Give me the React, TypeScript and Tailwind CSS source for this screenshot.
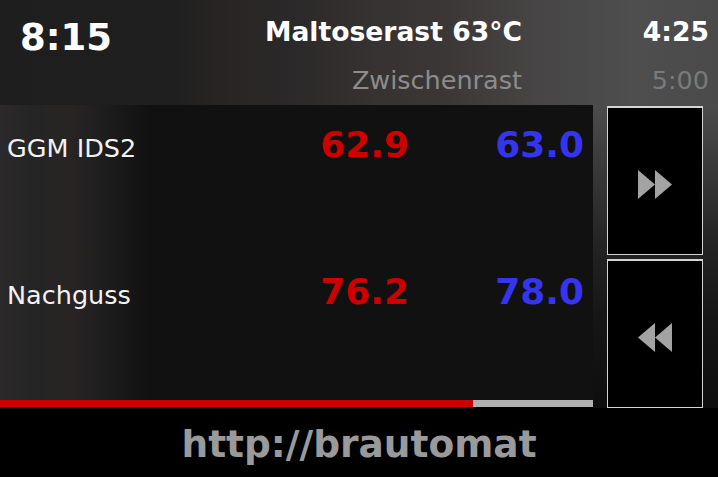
import React from "react";

type Row = {
  name: string;
  actual: string;
  target: string;
};

const rows: Row[] = [
  { name: "GGM IDS2", actual: "62.9", target: "63.0" },
  { name: "Nachguss", actual: "76.2", target: "78.0" },
];

const progress = 473 / 593;

const Forward = () => (
  <svg width="34" height="29" viewBox="0 0 34 29">
    <polygon points="0,0 17,14.5 0,29" fill="#a3a3a3" />
    <polygon points="17,0 34,14.5 17,29" fill="#a3a3a3" />
  </svg>
);

const Rewind = () => (
  <svg width="34" height="29" viewBox="0 0 34 29">
    <polygon points="17,0 0,14.5 17,29" fill="#a3a3a3" />
    <polygon points="34,0 17,14.5 34,29" fill="#a3a3a3" />
  </svg>
);

export default function App() {
  return (
    <div className="w-[718px] h-[477px] overflow-hidden bg-black font-['DejaVu_Sans',sans-serif]">
      {/* header */}
      <div className="flex h-[105px] pt-[19px] bg-[linear-gradient(to_right,#1e1e1e_0%,#1f1f1f_24%,#292524_32%,#2a2828_40%,#363231_52%,#3b3736_62%,#474545_75%,#4e4e4e_88%,#4a4a4a_100%)]">
        <div className="w-[200px] pl-[20px]">
          <div className="text-[37px] leading-none font-bold text-white">8:15</div>
        </div>
        <div className="w-[322px] flex flex-col items-end">
          <div className="text-[26.6px] leading-none font-bold text-white whitespace-nowrap">
            Maltoserast 63°C
          </div>
          <div className="mt-[22px] text-[25.5px] leading-none text-[#8c8c8c]">
            Zwischenrast
          </div>
        </div>
        <div className="w-[187px] flex flex-col items-end">
          <div className="text-[26.6px] leading-none font-bold text-white">4:25</div>
          <div className="mt-[22px] text-[25.5px] leading-none text-[#7a7a7a]">5:00</div>
        </div>
      </div>

      {/* main */}
      <div className="flex h-[303px]">
        <div className="w-[593px] flex flex-col">
          <div className="h-[295px] flex flex-col bg-[linear-gradient(to_right,#2b2929_0%,#252424_6%,#282424_12%,#1f1e1e_17%,#161616_22%,#111111_25%,#111111_100%)]">
            {rows.map((row) => (
              <div key={row.name} className="h-[147px] flex items-baseline pt-[22px] pr-[9px]">
                <div className="flex-1 pl-[7px] text-[25.5px] leading-none text-[#f2f2f2]">
                  {row.name}
                </div>
                <div className="w-[120px] text-right text-[36px] leading-none font-bold text-[#cc0000]">
                  {row.actual}
                </div>
                <div className="w-[175px] text-right text-[36px] leading-none font-bold text-[#3535f0]">
                  {row.target}
                </div>
              </div>
            ))}
          </div>
          <div className="h-[7px] flex bg-[#b0b0b0]">
            <div className="h-full bg-[#cc0000]" style={{ width: `${progress * 100}%` }} />
          </div>
        </div>

        <div className="w-[125px] pl-[14px] pt-[1px] flex flex-col gap-[4px] bg-[linear-gradient(to_bottom,#4c4c4c_0%,#3a3a3a_20%,#242424_45%,#161616_70%,#0e0e0e_100%)]">
          <button className="w-[96px] h-[149px] bg-black border border-[#d4d4d4] border-t-2 flex items-center justify-center pt-[6px]">
            <Forward />
          </button>
          <button className="w-[96px] h-[149px] bg-black border border-[#d4d4d4] border-t-2 flex items-center justify-center pt-[6px]">
            <Rewind />
          </button>
        </div>
      </div>

      {/* footer */}
      <div className="h-[69px] pt-[18px] text-center text-[37.5px] leading-none font-bold text-[#9a9a9a]">
        http://brautomat
      </div>
    </div>
  );
}
